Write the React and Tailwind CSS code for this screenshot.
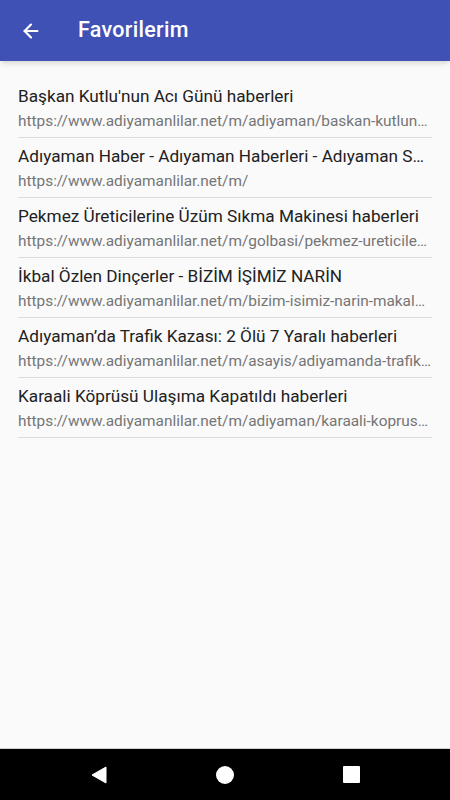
import { ArrowLeft } from 'lucide-react';

const favorites = [
  { title: "Başkan Kutlu'nun Acı Günü haberleri", url: 'https://www.adiyamanlilar.net/m/adiyaman/baskan-kutlunun-aci-gunu' },
  { title: 'Adıyaman Haber - Adıyaman Haberleri - Adıyaman Son Dakika', url: 'https://www.adiyamanlilar.net/m/' },
  { title: 'Pekmez Üreticilerine Üzüm Sıkma Makinesi haberleri', url: 'https://www.adiyamanlilar.net/m/golbasi/pekmez-ureticilerine-uzum' },
  { title: 'İkbal Özlen Dinçerler - BİZİM İŞİMİZ NARİN', url: 'https://www.adiyamanlilar.net/m/bizim-isimiz-narin-makalesi' },
  { title: 'Adıyaman’da Trafik Kazası: 2 Ölü 7 Yaralı haberleri', url: 'https://www.adiyamanlilar.net/m/asayis/adiyamanda-trafik-kazasi' },
  { title: 'Karaali Köprüsü Ulaşıma Kapatıldı haberleri', url: 'https://www.adiyamanlilar.net/m/adiyaman/karaali-koprusu-ulasima' },
];

export default function App() {
  return (
    <div className="w-[450px] h-[800px] flex flex-col bg-[#fafafa] font-['Roboto',sans-serif] overflow-hidden">
      {/* Toolbar */}
      <div className="h-[61px] shrink-0 bg-[#3f51b5] flex items-center shadow-md">
        <ArrowLeft size={22} strokeWidth={2.4} className="text-white ml-[20px]" />
        <h1 className="ml-[36px] text-white text-[21.5px] font-medium tracking-[0.3px]">Favorilerim</h1>
      </div>

      {/* List */}
      <div className="flex-1 flex flex-col px-[18px] pt-[17px]">
        {favorites.map((item) => (
          <div key={item.url} className="h-[60px] flex flex-col justify-center border-b border-[#dcdcdc]">
            <p className="text-[17.2px] leading-[22px] text-[#212121] truncate">{item.title}</p>
            <p className="text-[15.4px] leading-[20px] text-[#757575] truncate mt-[4px]">{item.url}</p>
          </div>
        ))}
      </div>

      {/* Navigation bar */}
      <div className="h-[52px] shrink-0 bg-black flex items-center justify-center gap-[109px] border-t border-[#cfcfcf]">
        <svg width="16" height="18" viewBox="0 0 16 18">
          <path d="M15 1 L15 17 L1 9 Z" fill="#fff" strokeLinejoin="round" stroke="#fff" strokeWidth="1" />
        </svg>
        <div className="w-[18px] h-[18px] rounded-full bg-white" />
        <div className="w-[17px] h-[17px] rounded-[1px] bg-white" />
      </div>
    </div>
  );
}
